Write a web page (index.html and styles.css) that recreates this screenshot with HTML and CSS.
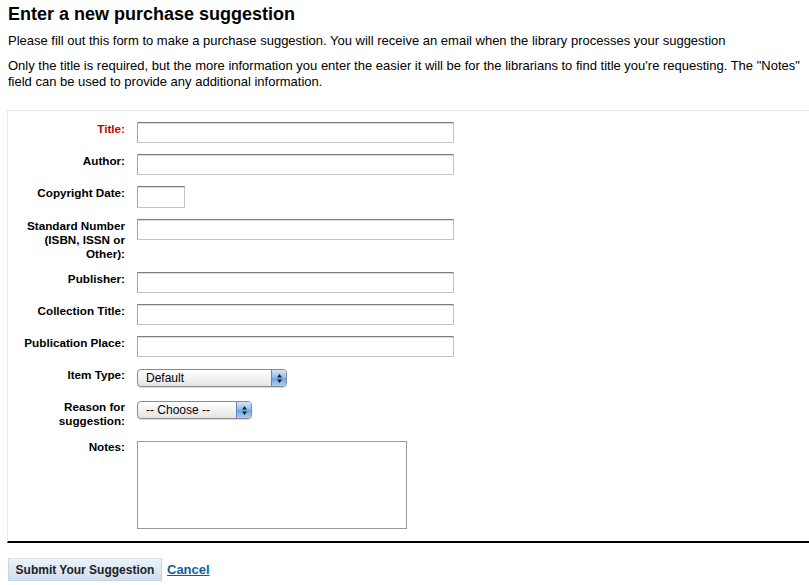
FILE: index.html
```html
<!DOCTYPE html>
<html>
<head>
<meta charset="utf-8">
<title>Purchase suggestion</title>
<link rel="stylesheet" href="styles.css">
</head>
<body>
<div class="page">
  <h1 class="heading">Enter a new purchase suggestion</h1>
  <p class="intro">Please fill out this form to make a purchase suggestion. You will receive an email when the library processes your suggestion</p>
  <p class="intro">Only the title is required, but the more information you enter the easier it will be for the librarians to find title you're requesting. The "Notes" field can be used to provide any additional information.</p>
  <form class="form">
    <fieldset class="fields">
      <ol class="rows">
        <li class="row"><label class="lbl required" for="title">Title:</label><input class="txt" id="title" type="text"></li>
        <li class="row"><label class="lbl" for="author">Author:</label><input class="txt" id="author" type="text"></li>
        <li class="row"><label class="lbl" for="cdate">Copyright Date:</label><input class="txt short" id="cdate" type="text"></li>
        <li class="row"><label class="lbl" for="isbn">Standard Number (ISBN, ISSN or Other):</label><input class="txt" id="isbn" type="text"></li>
        <li class="row"><label class="lbl" for="pub">Publisher:</label><input class="txt" id="pub" type="text"></li>
        <li class="row"><label class="lbl" for="coll">Collection Title:</label><input class="txt" id="coll" type="text"></li>
        <li class="row"><label class="lbl" for="place">Publication Place:</label><input class="txt" id="place" type="text"></li>
        <li class="row"><label class="lbl" for="itype">Item Type:</label>
          <span class="sel sel-wide"><select id="itype"><option>Default</option></select><span class="arrows"><svg width="7" height="11" viewBox="0 0 7 11"><path d="M3.5 1 L6 4.5 H1 Z M3.5 10 L6 6.5 H1 Z" fill="#1a1a1a"/></svg></span></span>
        </li>
        <li class="row"><label class="lbl" for="reason">Reason for suggestion:</label>
          <span class="sel sel-narrow"><select id="reason"><option>-- Choose --</option></select><span class="arrows"><svg width="7" height="11" viewBox="0 0 7 11"><path d="M3.5 1 L6 4.5 H1 Z M3.5 10 L6 6.5 H1 Z" fill="#1a1a1a"/></svg></span></span>
        </li>
        <li class="row"><label class="lbl notes-lbl" for="notes">Notes:</label><textarea class="notes" id="notes"></textarea></li>
      </ol>
    </fieldset>
    <div class="actions">
      <button type="button" class="submit">Submit Your Suggestion</button>
      <a class="cancel" href="#">Cancel</a>
    </div>
  </form>
</div>
</body>
</html>
```

FILE: styles.css
```css
html, body {
  margin: 0;
  padding: 0;
  background: #fff;
}
body {
  font-family: "Liberation Sans", Arial, Helvetica, sans-serif;
  color: #000;
}
.page {
  padding: 0 0 0 8px;
}
.heading {
  font-size: 18px;
  line-height: 21px;
  font-weight: bold;
  margin: 4px 0 8px 0;
}
.intro {
  font-size: 13px;
  line-height: 16px;
  margin: 0 0 9px 0;
}
.form {
  margin: 0;
}
.fields {
  margin: 20px 0 0 -1px;
  padding: 11px 0 12px 0;
  border: 1px solid #ebebeb;
  border-right: none;
  border-bottom: 2px solid #000;
}
.rows {
  list-style: none;
  margin: 0;
  padding: 0;
}
.row {
  display: flex;
  align-items: flex-start;
  gap: 12px;
  margin-bottom: 11px;
}
.row:last-child {
  margin-bottom: 0;
}
.lbl {
  width: 117px;
  flex: none;
  text-align: right;
  font-size: 11.7px;
  line-height: 14px;
  font-weight: bold;
  padding-top: 0;
}
.notes-lbl {
  padding-top: 1px;
}
.required {
  color: #cc0000;
}
.txt {
  box-sizing: border-box;
  width: 317px;
  height: 21px;
  margin: 0;
  padding: 1px 3px;
  border: 1px solid #c4c4c4;
  border-top-color: #7e7e7e;
  border-left-color: #a8a8a8;
  box-shadow: inset 0 1px 0 #dcdcdc;
  background: #fff;
  font: 12px "Liberation Sans", Arial, sans-serif;
}
.short {
  width: 48px;
  height: 22px;
}
.sel {
  display: inline-flex;
  box-sizing: border-box;
  height: 18px;
  margin: 1px 0 2px 0;
  border: 1px solid #8a8a8a;
  border-radius: 4px;
  overflow: hidden;
  background: linear-gradient(#ffffff, #f2f2f2 50%, #e4e4e4);
  box-shadow: 0 1px 1px rgba(0,0,0,0.15);
}
.sel-wide {
  width: 150px;
}
.sel-narrow {
  width: 115px;
}
.sel select {
  appearance: none;
  -webkit-appearance: none;
  flex: 1;
  min-width: 0;
  border: none;
  background: transparent;
  margin: 0;
  padding: 0 0 0 8px;
  height: 16px;
  line-height: 16px;
  font: 12px "Liberation Sans", Arial, sans-serif;
  color: #000;
}
.arrows {
  width: 14px;
  flex: none;
  display: flex;
  align-items: center;
  justify-content: center;
  border-left: 1px solid #5f87b8;
  background: linear-gradient(#d4e6f8, #8fb9e8 50%, #6ea3e0 51%, #a8cdf3);
}
.notes {
  box-sizing: border-box;
  width: 270px;
  height: 88px;
  margin: 2px 0 0 0;
  padding: 2px;
  border: 1px solid #9a9a9a;
  resize: none;
  font: 12px "Liberation Sans", Arial, sans-serif;
}
.actions {
  display: flex;
  align-items: center;
  gap: 5px;
  margin-top: 15px;
}
.submit {
  box-sizing: border-box;
  width: 154px;
  height: 23px;
  margin: 0;
  padding: 0;
  border: 1px solid #c8d4de;
  border-top-color: #dde6ee;
  background: linear-gradient(#eaf3fb, #d9e6f2 60%, #cfdeec);
  font: bold 12px "Liberation Sans", Arial, sans-serif;
  color: #222;
}
.cancel {
  font-size: 13px;
  font-weight: bold;
  color: #0a5f9e;
  text-decoration: underline;
}
```
